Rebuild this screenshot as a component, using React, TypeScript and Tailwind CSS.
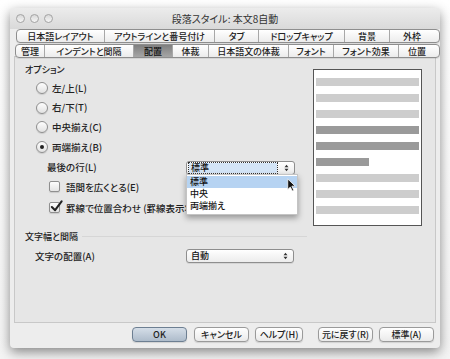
import React from 'react'

const font = { fontFamily: '"Noto Sans CJK JP", "Noto Sans", sans-serif' }

const row1 = [
  ['日本語レイアウト', 87],
  ['アウトラインと番号付け', 110],
  ['タブ', 44],
  ['ドロップキャップ', 86],
  ['背景', 45],
  ['外枠', 45],
] as const

const row2 = [
  ['管理', 28],
  ['インデントと間隔', 89],
  ['配置', 39],
  ['体裁', 36],
  ['日本語文の体裁', 80],
  ['フォント', 45],
  ['フォント効果', 65],
  ['位置', 37],
] as const

function TabRow({ tabs, active }: { tabs: readonly (readonly [string, number])[]; active?: string }) {
  return (
    <div className="flex h-[14px] rounded-[4px] border border-[#8e8e8e] overflow-hidden bg-gradient-to-b from-white to-[#ececec] shadow-[0_1px_0_rgba(0,0,0,0.08)]">
      {tabs.map(([label, w], i) => (
        <div
          key={label}
          style={{ width: w }}
          className={`flex items-center justify-center text-[9px] leading-none font-medium ${
            i > 0 ? 'border-l border-[#a8a8a8]' : ''
          } ${
            label === active
              ? 'bg-gradient-to-b from-[#7f7f7f] to-[#a6a6a6] text-[#111]'
              : 'text-[#222]'
          }`}
        >
          {label}
        </div>
      ))}
    </div>
  )
}

function Radio({ label, checked }: { label: string; checked?: boolean }) {
  return (
    <div className="flex items-center h-[19.7px] gap-[4px]">
      <div className="w-[12px] h-[12px] rounded-full border border-[#8f8f8f] bg-gradient-to-b from-[#fdfdfd] to-[#e2e2e2] flex items-center justify-center shadow-[0_1px_1px_rgba(0,0,0,0.12)]">
        {checked && <div className="w-[4px] h-[4px] rounded-full bg-[#222]" />}
      </div>
      <span className="text-[9.5px] font-medium text-[#222]">{label}</span>
    </div>
  )
}

function Check({ label, checked, h }: { label: string; checked?: boolean; h: string }) {
  return (
    <div className={`flex items-center gap-[6px] ${h}`}>
      <div className="relative w-[11px] h-[11px] rounded-[2px] border border-[#8f8f8f] bg-gradient-to-b from-[#fdfdfd] to-[#e4e4e4] shadow-[0_1px_1px_rgba(0,0,0,0.12)]">
        {checked && (
          <svg viewBox="0 0 14 14" className="absolute -top-[3px] left-[0px] w-[13px] h-[13px]">
            <path d="M2 7.5 L5.5 11 L12.5 1.5" fill="none" stroke="#222" strokeWidth="2.2" strokeLinecap="round" strokeLinejoin="round" />
          </svg>
        )}
      </div>
      <span className="text-[9.5px] font-medium text-[#222] whitespace-nowrap">{label}</span>
    </div>
  )
}

function Select({ value, w, focus }: { value: string; w: number; focus?: boolean }) {
  return (
    <div
      style={{ width: w }}
      className="h-[14px] rounded-[3px] border border-[#8e8e8e] bg-gradient-to-b from-white to-[#ececec] flex items-center justify-between pl-[2px] pr-[5px] shadow-[0_1px_0_rgba(0,0,0,0.08)]"
    >
      <span
        className={`text-[9px] leading-[10px] font-medium text-[#111] px-[2px] ${
          focus ? 'outline outline-1 outline-dotted outline-[#333] bg-[#d4e5f7] w-[88px]' : ''
        }`}
      >
        {value}
      </span>
      <svg viewBox="0 0 6 10" className="w-[5px] h-[8px]">
        <path d="M0.5 4 L3 1 L5.5 4 Z M0.5 6 L3 9 L5.5 6 Z" fill="#333" />
      </svg>
    </div>
  )
}

function Button({ label, w, primary }: { label: string; w: number; primary?: boolean }) {
  return (
    <div
      style={{ width: w }}
      className={`h-[15px] rounded-[4px] border flex items-center justify-center text-[9px] font-medium text-[#222] shadow-[0_1px_1px_rgba(0,0,0,0.12)] ${
        primary
          ? 'border-[#6d7f92] bg-gradient-to-b from-[#d5dee8] to-[#aebccb]'
          : 'border-[#9a9a9a] bg-gradient-to-b from-white to-[#eaeaea]'
      }`}
    >
      {label}
    </div>
  )
}

const bars = [
  [1, false],
  [1, false],
  [1, false],
  [1, true],
  [1, true],
  [0.5, true],
  [1, false],
  [1, false],
  [1, false],
] as const

export default function App() {
  return (
    <div
      style={font}
      className="w-[450px] h-[359px] bg-gradient-to-b from-white to-[#f4f4f4] pt-[8px] pl-[10px] overflow-hidden [font-feature-settings:'palt']"
    >
      <div className="w-[430px] h-[340px] rounded-[4px] bg-[#ededed] shadow-[0_4px_12px_rgba(0,0,0,0.45)] flex flex-col">
        <div className="h-[21px] rounded-t-[4px] bg-gradient-to-b from-[#ececec] to-[#d9d9d9] flex items-center relative">
          <div className="flex gap-[5px] pl-[6px]">
            {[0, 1, 2].map(i => (
              <div key={i} className="w-[9px] h-[9px] rounded-full border border-[#a3a3a3] bg-gradient-to-b from-[#d8d8d8] to-[#f6f6f6]" />
            ))}
          </div>
          <div className="absolute inset-0 flex items-center justify-center text-[10px] text-[#333]">
            段落スタイル: 本文8自動
          </div>
        </div>

        <div className="pl-[6px]">
          <TabRow tabs={row1} />
        </div>
        <div className="pl-[5px] pt-[1px] relative z-10">
          <TabRow tabs={row2} active="配置" />
        </div>

        <div className="mx-[4px] -mt-[2px] h-[267px] border border-[#c8c8c8] bg-[#e6e6e6] flex">
          <div className="w-[298px] pl-[10px] pt-[6px] flex flex-col">
            <div className="text-[9px] font-medium text-[#222] h-[14px] flex items-center">オプション</div>
            <div className="pl-[11px] pt-[1px] flex flex-col">
              <Radio label="左/上(L)" />
              <Radio label="右/下(T)" />
              <Radio label="中央揃え(C)" />
              <Radio label="両端揃え(B)" checked />
            </div>
            <div className="flex items-center h-[20px] pl-[22px]">
              <span className="w-[139px] text-[9.5px] font-medium text-[#222]">最後の行(L)</span>
              <div className="relative mt-[2px]">
                <Select value="標準" w={109} focus />
                <div className="absolute left-0 top-[13px] w-[112px] bg-white border border-[#c4c4c4] shadow-[0_3px_6px_rgba(0,0,0,0.35)] pt-[1px] pb-[2px] z-20">
                  <div className="h-[12px] bg-[#b6d3f2] text-[9px] leading-[12px] font-medium pl-[3px] text-[#111]">標準</div>
                  <div className="h-[12px] text-[9px] leading-[12px] font-medium pl-[3px] text-[#111]">中央</div>
                  <div className="h-[12px] text-[9px] leading-[12px] font-medium pl-[3px] text-[#111]">両端揃え</div>
                  <svg viewBox="0 0 12 18" className="absolute left-[100px] top-[3px] w-[9px] h-[14px]">
                    <path d="M1 1 L1 15 L4.5 11.5 L7 17 L9 16 L6.5 10.5 L11 10.5 Z" fill="#111" stroke="#fff" strokeWidth="1" />
                  </svg>
                </div>
              </div>
            </div>
            <div className="pl-[24px] flex flex-col">
              <Check label="語間を広くとる(E)" h="h-[20px]" />
              <Check label="罫線で位置合わせ (罫線表示状態のみ)" checked h="h-[22px]" />
            </div>
            <div className="flex items-center gap-[4px] h-[14px] mt-[11px]">
              <span className="text-[9px] font-medium text-[#222]">文字幅と間隔</span>
              <div className="flex-1 h-px bg-[#d6d6d6] mr-[6px]" />
            </div>
            <div className="flex items-center h-[22px] pl-[10px] mt-[1px]">
              <span className="w-[151px] text-[9.5px] font-medium text-[#222]">文字の配置(A)</span>
              <Select value="自動" w={108} />
            </div>
          </div>
          <div className="pt-[12px]">
            <div className="w-[109px] h-[157px] bg-white border border-[#555] flex flex-col gap-[8px] pt-[8px] px-[2px]">
              {bars.map(([f, dark], i) => (
                <div
                  key={i}
                  style={{ width: f === 1 ? '100%' : '51%' }}
                  className={`h-[8px] ${dark ? 'bg-[#9a9a9a]' : 'bg-[#cdcdcd]'}`}
                />
              ))}
            </div>
          </div>
        </div>

        <div className="flex justify-end gap-[6px] pr-[6px] pt-[4px]">
          <div className="mr-[1px]">
            <Button label="OK" w={55} primary />
          </div>
          <Button label="キャンセル" w={55} />
          <div className="mr-[9px]">
            <Button label="ヘルプ(H)" w={48} />
          </div>
          <Button label="元に戻す(R)" w={55} />
          <Button label="標準(A)" w={55} />
        </div>
      </div>
    </div>
  )
}
